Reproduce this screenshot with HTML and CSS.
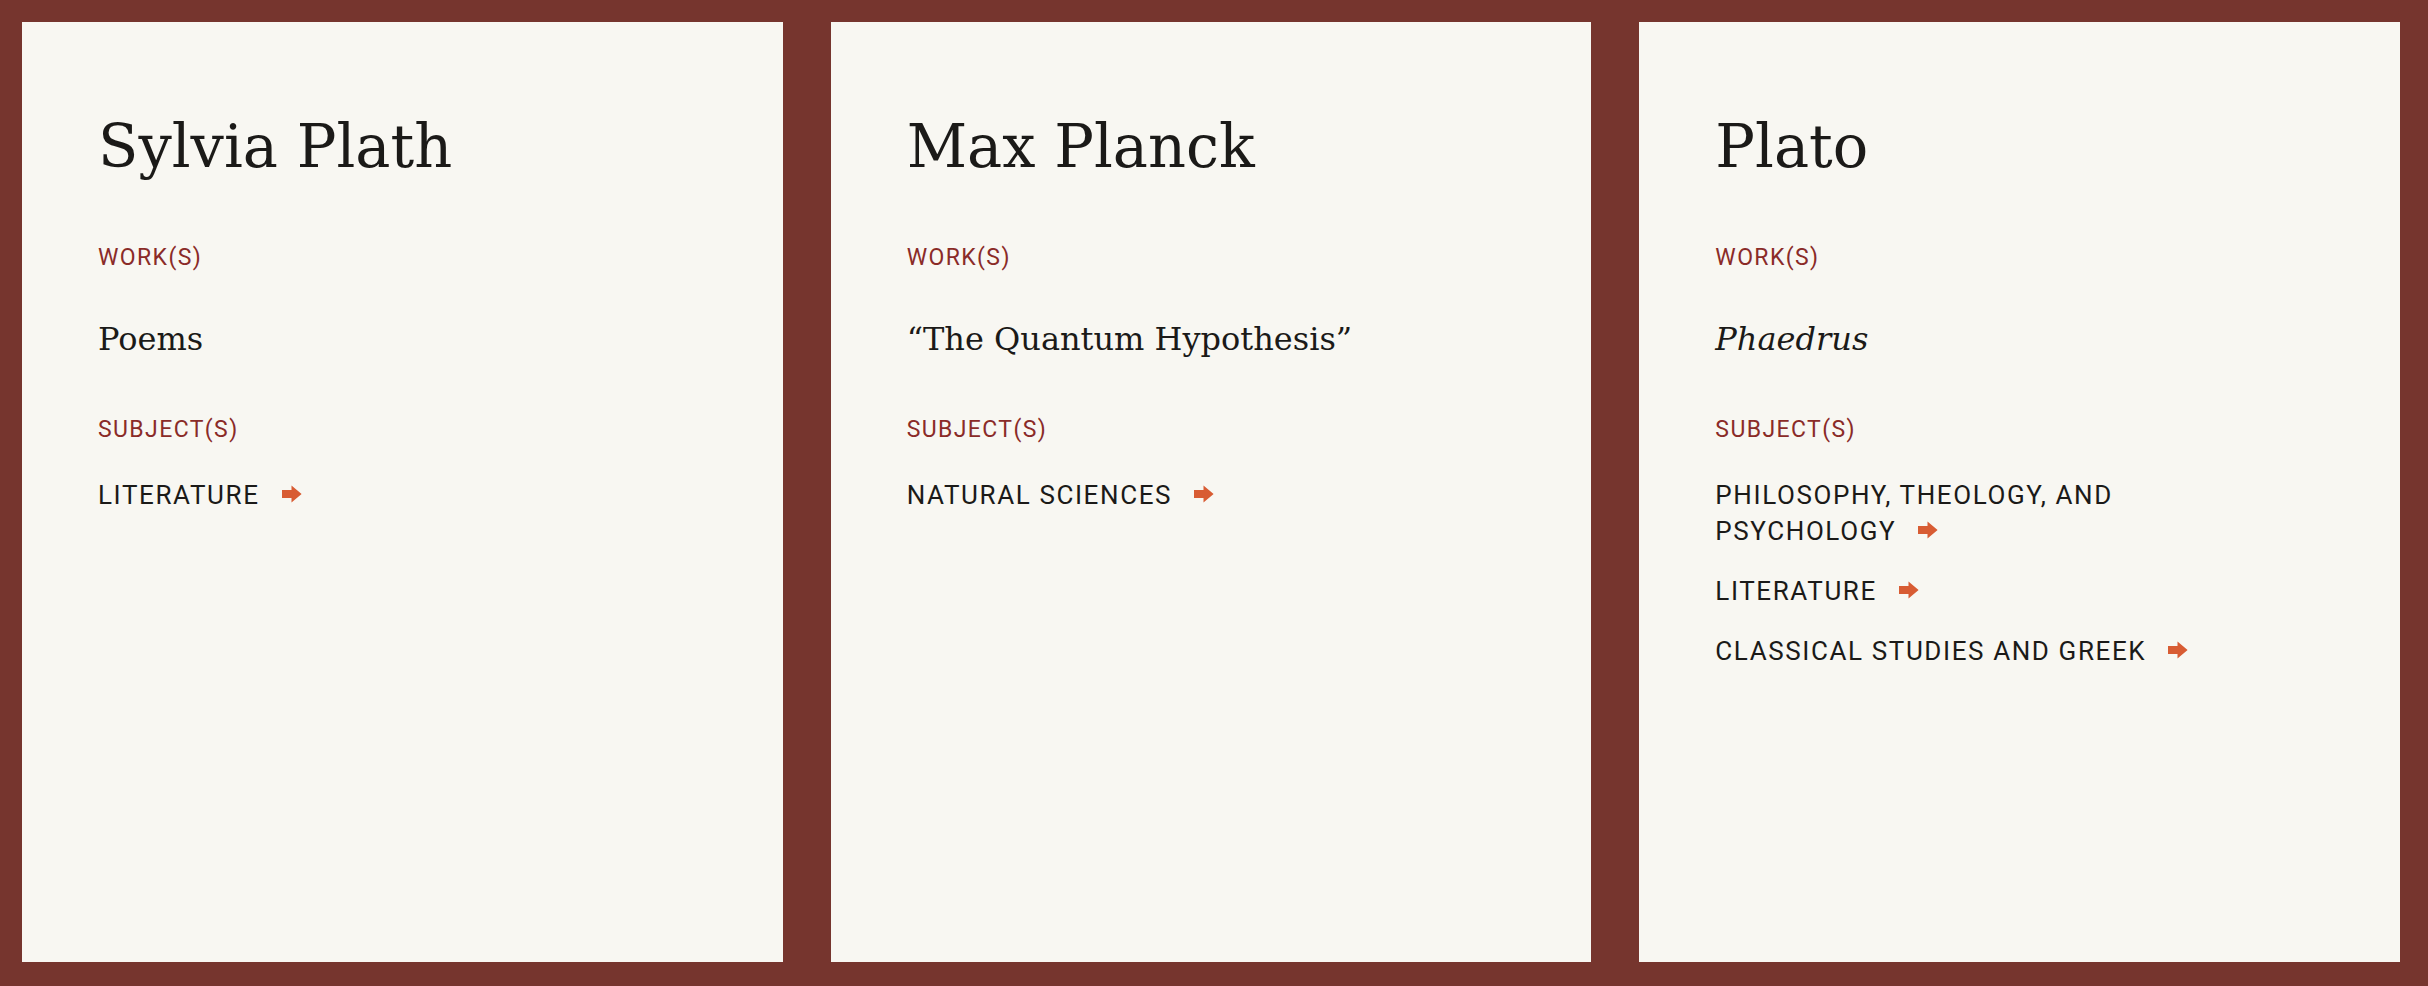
FILE: index.html
```html
<!DOCTYPE html>
<html lang="en">
<head>
<meta charset="utf-8">
<title>Authors</title>
<link rel="stylesheet" href="styles.css">
</head>
<body>
<main class="grid">
  <article class="card">
    <h2 class="name">Sylvia Plath</h2>
    <div class="label">Work(s)</div>
    <p class="work">Poems</p>
    <div class="label label-subjects">Subject(s)</div>
    <ul class="subjects">
      <li><a class="subject" href="#"><span class="last">Literature<svg class="arrow" viewBox="0 0 20 18" width="20" height="18" aria-hidden="true"><path d="M0 5H9.5V0.6L19.6 9L9.5 17.4V13H0Z"/></svg></span></a></li>
    </ul>
  </article>
  <article class="card">
    <h2 class="name">Max Planck</h2>
    <div class="label">Work(s)</div>
    <p class="work">“The Quantum Hypothesis”</p>
    <div class="label label-subjects">Subject(s)</div>
    <ul class="subjects">
      <li><a class="subject" href="#">Natural <span class="last">Sciences<svg class="arrow" viewBox="0 0 20 18" width="20" height="18" aria-hidden="true"><path d="M0 5H9.5V0.6L19.6 9L9.5 17.4V13H0Z"/></svg></span></a></li>
    </ul>
  </article>
  <article class="card">
    <h2 class="name">Plato</h2>
    <div class="label">Work(s)</div>
    <p class="work"><em>Phaedrus</em></p>
    <div class="label label-subjects">Subject(s)</div>
    <ul class="subjects">
      <li><a class="subject" href="#">Philosophy, Theology, and <span class="last">Psychology<svg class="arrow" viewBox="0 0 20 18" width="20" height="18" aria-hidden="true"><path d="M0 5H9.5V0.6L19.6 9L9.5 17.4V13H0Z"/></svg></span></a></li>
      <li><a class="subject" href="#"><span class="last">Literature<svg class="arrow" viewBox="0 0 20 18" width="20" height="18" aria-hidden="true"><path d="M0 5H9.5V0.6L19.6 9L9.5 17.4V13H0Z"/></svg></span></a></li>
      <li><a class="subject" href="#">Classical Studies and <span class="last">Greek<svg class="arrow" viewBox="0 0 20 18" width="20" height="18" aria-hidden="true"><path d="M0 5H9.5V0.6L19.6 9L9.5 17.4V13H0Z"/></svg></span></a></li>
    </ul>
  </article>
</main>
</body>
</html>
```
FILE: styles.css
```css
html, body {
  height: 100%;
}

body {
  margin: 0;
  background: #76352e;
  box-sizing: border-box;
  padding: 22px 28px 24px 22px;
}

.grid {
  display: grid;
  grid-template-columns: repeat(3, 1fr);
  gap: 48px;
  height: 100%;
}

.card {
  background: #f8f7f2;
  padding: 80px 76px;
  color: #1b1a18;
}

.name {
  margin: 0;
  font-family: "DejaVu Serif", "Liberation Serif", serif;
  font-weight: 400;
  font-size: 59px;
  line-height: 89px;
  color: #1b1a18;
}

.label {
  margin-top: 52px;
  font-family: Roboto, "Liberation Sans", sans-serif;
  font-size: 23px;
  line-height: 30px;
  letter-spacing: 1.4px;
  text-transform: uppercase;
  color: #8a2b28;
}

.label-subjects {
  margin-top: 56px;
}

.work {
  margin: 46px 0 0;
  font-family: "DejaVu Serif", "Liberation Serif", serif;
  font-size: 32px;
  line-height: 40px;
  color: #1b1a18;
}

.work em {
  font-style: italic;
}

.subjects {
  list-style: none;
  margin: 32px 0 0;
  padding: 0;
  max-width: 600px;
  display: flex;
  flex-direction: column;
  gap: 24px;
}

.subject {
  font-family: Roboto, "Liberation Sans", sans-serif;
  font-size: 26px;
  line-height: 36px;
  letter-spacing: 1.6px;
  text-transform: uppercase;
  color: #1b1a18;
  text-decoration: none;
}

.last {
  white-space: nowrap;
}

.arrow {
  fill: #d85c33;
  margin-left: 22px;
  vertical-align: 1px;
}
```
